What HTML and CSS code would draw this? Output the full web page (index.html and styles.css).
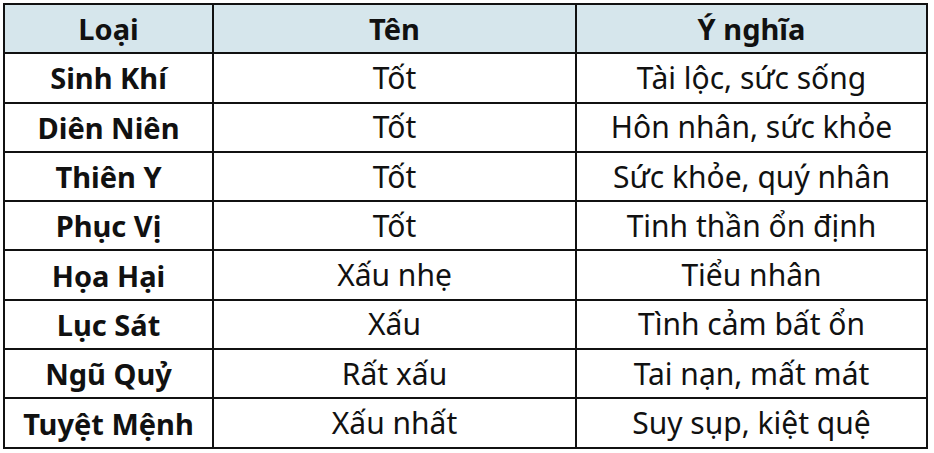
FILE: index.html
```html
<!DOCTYPE html>
<html lang="vi">
<head>
<meta charset="utf-8">
<link rel="stylesheet" href="styles.css">
</head>
<body>
<table class="grid">
  <colgroup>
    <col class="c1"><col class="c2"><col class="c3">
  </colgroup>
  <thead>
    <tr class="head"><th>Loại</th><th>Tên</th><th>Ý nghĩa</th></tr>
  </thead>
  <tbody>
    <tr><th>Sinh Khí</th><td>Tốt</td><td>Tài lộc, sức sống</td></tr>
    <tr><th>Diên Niên</th><td>Tốt</td><td>Hôn nhân, sức khỏe</td></tr>
    <tr><th>Thiên Y</th><td>Tốt</td><td>Sức khỏe, quý nhân</td></tr>
    <tr><th>Phục Vị</th><td>Tốt</td><td>Tinh thần ổn định</td></tr>
    <tr><th>Họa Hại</th><td>Xấu nhẹ</td><td>Tiểu nhân</td></tr>
    <tr><th>Lục Sát</th><td>Xấu</td><td>Tình cảm bất ổn</td></tr>
    <tr><th>Ngũ Quỷ</th><td>Rất xấu</td><td>Tai nạn, mất mát</td></tr>
    <tr><th>Tuyệt Mệnh</th><td>Xấu nhất</td><td>Suy sụp, kiệt quệ</td></tr>
  </tbody>
</table>
</body>
</html>
```
FILE: styles.css
```css
html, body {
  margin: 0;
  background: #ffffff;
}
body {
  padding: 3px 0 0 3px;
  font-family: "Noto Sans", "Liberation Sans", sans-serif;
  color: #111111;
}
.grid {
  border-collapse: collapse;
  width: 923px;
  table-layout: fixed;
}
.c1 { width: 209px; }
.c2 { width: 363px; }
.c3 { width: 351px; }
.grid th, .grid td {
  border: 2px solid #111111;
  height: 47.3px;
  padding: 0;
  text-align: center;
  vertical-align: middle;
  line-height: 1;
}
.grid th {
  font-weight: 700;
  font-size: 29px;
}
.grid td {
  font-weight: 400;
  font-size: 30px;
}
.head th {
  background: #d6e6ec;
}
```
